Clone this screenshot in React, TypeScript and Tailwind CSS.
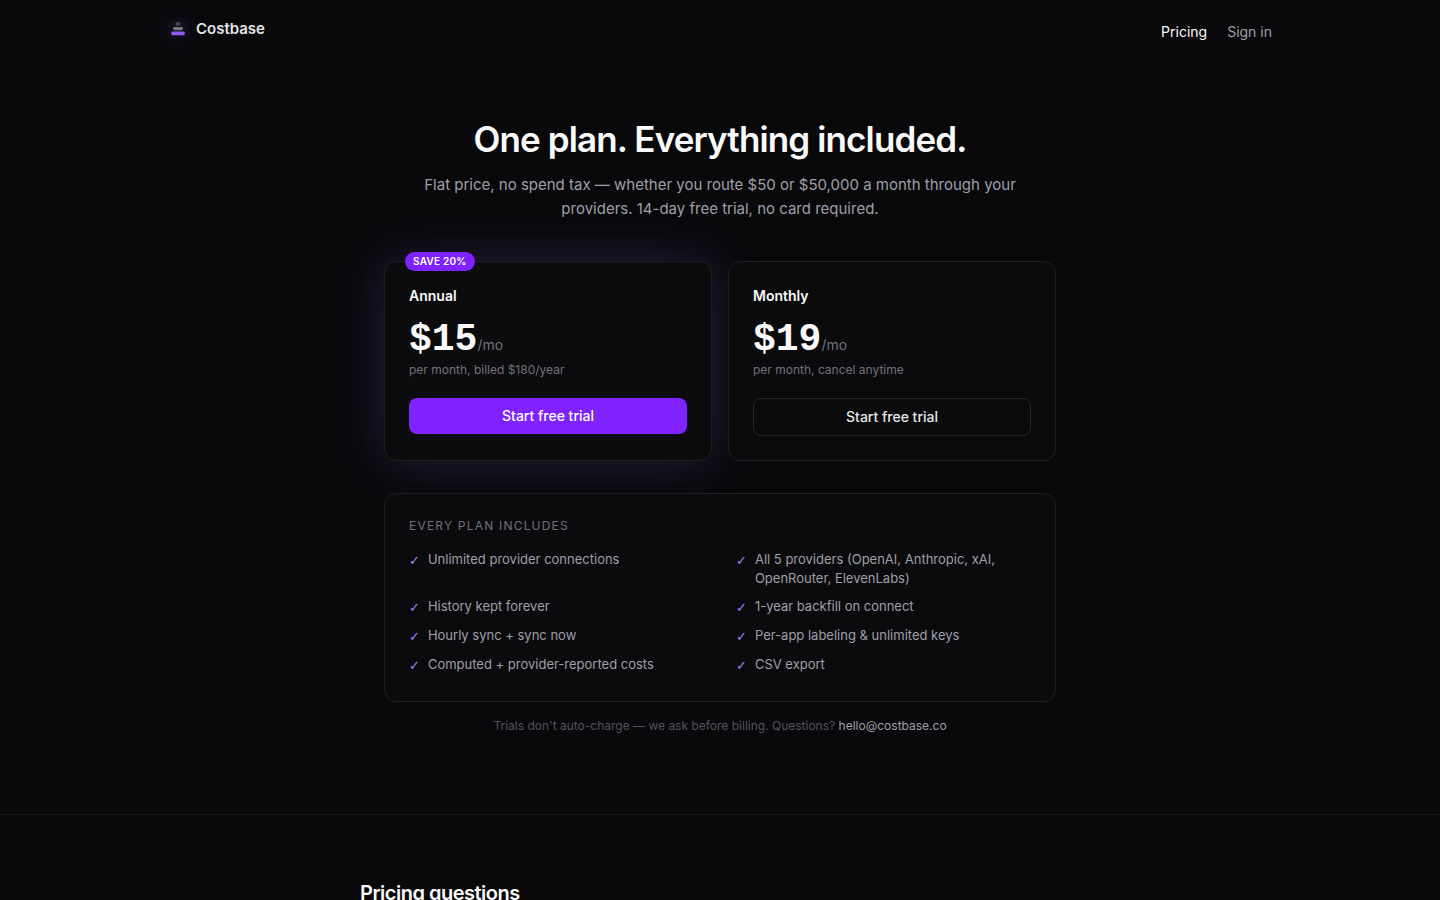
const includes = [
  'Unlimited provider connections',
  'All 5 providers (OpenAI, Anthropic, xAI, OpenRouter, ElevenLabs)',
  'History kept forever',
  '1-year backfill on connect',
  'Hourly sync + sync now',
  'Per-app labeling & unlimited keys',
  'Computed + provider-reported costs',
  'CSV export',
];

type PlanProps = {
  name: string;
  price: string;
  note: string;
  badge?: string;
  featured?: boolean;
};

function Logo() {
  return (
    <svg
      className="size-5 rounded-md bg-[#110e1a] shadow-[0_0_20px_rgba(139,92,246,0.12)]"
      viewBox="0 0 20 20"
      aria-hidden="true"
    >
      <rect x="7.4" y="3.1" width="5.2" height="3.6" rx="1.6" fill="#45454c" />
      <rect x="5.2" y="7.9" width="9.6" height="3.3" rx="1.4" fill="#77777f" />
      <rect x="3.2" y="12.4" width="13.6" height="3.8" rx="1.4" fill="#8b5cf6" />
    </svg>
  );
}

function Plan({ name, price, note, badge, featured }: PlanProps) {
  return (
    <article
      className={
        featured
          ? 'relative rounded-xl border border-[#1f1f22] bg-[#0c0c0e] p-6 shadow-[0_0_50px_rgba(139,92,246,0.22)]'
          : 'relative rounded-xl border border-[#1f1f22] bg-[#0c0c0e]/90 p-6'
      }
    >
      {badge && (
        <span className="absolute -top-2.5 left-5 rounded-full bg-[#7f22fe] px-2 text-[10px] leading-[19px] font-semibold tracking-wide text-white uppercase">
          {badge}
        </span>
      )}
      <h2 className="text-sm font-semibold text-[#fafafa]">{name}</h2>
      <p className="mt-3 flex items-baseline">
        <span className="font-['Liberation_Mono',monospace] text-[38px] leading-[44px] font-bold text-[#fafafa]">
          {price}
        </span>
        <span className="text-sm text-[#71717b]">/mo</span>
      </p>
      <p className="text-xs leading-4 text-[#71717b]">{note}</p>
      <button
        type="button"
        className={
          featured
            ? 'mt-5 h-9 w-full rounded-lg bg-[#7f22fe] text-sm font-medium text-white'
            : 'mt-5 h-[38px] w-full rounded-lg border border-[#27272a] text-sm font-medium text-[#e4e4e7]'
        }
      >
        Start free trial
      </button>
    </article>
  );
}

export default function App() {
  return (
    <div className="min-h-screen bg-[#09090b] font-['Inter','Liberation_Sans',sans-serif] text-[#fafafa]">
      <header className="mx-auto flex max-w-6xl items-start justify-between px-6 py-4">
        <a href="#home" className="flex h-[26px] items-center gap-2 text-[15px] font-semibold text-[#e4e4e7]">
          <Logo />
          Costbase
        </a>
        <nav className="flex h-8 items-center gap-5 text-sm">
          <a href="#pricing" className="text-[#fafafa]">Pricing</a>
          <a href="#sign-in" className="text-[#9f9fa9]">Sign in</a>
        </nav>
      </header>

      <main>
        <section className="mx-auto max-w-[720px] px-6 pt-[51px] pb-20">
          <div className="text-center">
            <h1 className="text-[35px] leading-[48px] font-semibold tracking-tight">
              One plan. Everything included.
            </h1>
            <p className="mx-auto mt-2.5 max-w-[600px] text-[15px] leading-6 text-[#9f9fa9]">
              Flat price, no spend tax — whether you route $50 or $50,000 a month through your
              providers. 14-day free trial, no card required.
            </p>
          </div>

          <div className="mt-10 grid grid-cols-1 gap-4 sm:grid-cols-2">
            <Plan name="Annual" price="$15" note="per month, billed $180/year" badge="Save 20%" featured />
            <Plan name="Monthly" price="$19" note="per month, cancel anytime" />
          </div>

          <div className="relative mt-8 rounded-xl border border-[#1f1f22] bg-[#0c0c0e]/90 px-6 pt-6 pb-[26px]">
            <h2 className="text-xs leading-4 tracking-widest text-[#71717b] uppercase">
              Every plan includes
            </h2>
            <ul className="mt-4 grid grid-cols-1 gap-x-8 gap-y-[9px] sm:grid-cols-2">
              {includes.map((item) => (
                <li key={item} className="flex min-h-5 items-start gap-2 text-[13px] leading-[19px] text-[#9f9fa9]">
                  <span className="pt-0.5 font-['DejaVu_Sans',sans-serif] leading-[18px] text-[#a684ff]" aria-hidden="true">
                    ✓
                  </span>
                  <span>{item}</span>
                </li>
              ))}
            </ul>
          </div>

          <p className="mt-4 text-center text-xs leading-4 text-[#52525c]">
            Trials don't auto-charge — we ask before billing. Questions?{' '}
            <a href="mailto:hello@costbase.co" className="text-[#9f9fa9]">hello@costbase.co</a>
          </p>
        </section>

        <section className="border-t border-[#18181b]">
          <div className="mx-auto max-w-3xl px-6 py-16">
            <h2 className="text-xl leading-7 font-semibold tracking-tight">Pricing questions</h2>
          </div>
        </section>
      </main>
    </div>
  );
}
